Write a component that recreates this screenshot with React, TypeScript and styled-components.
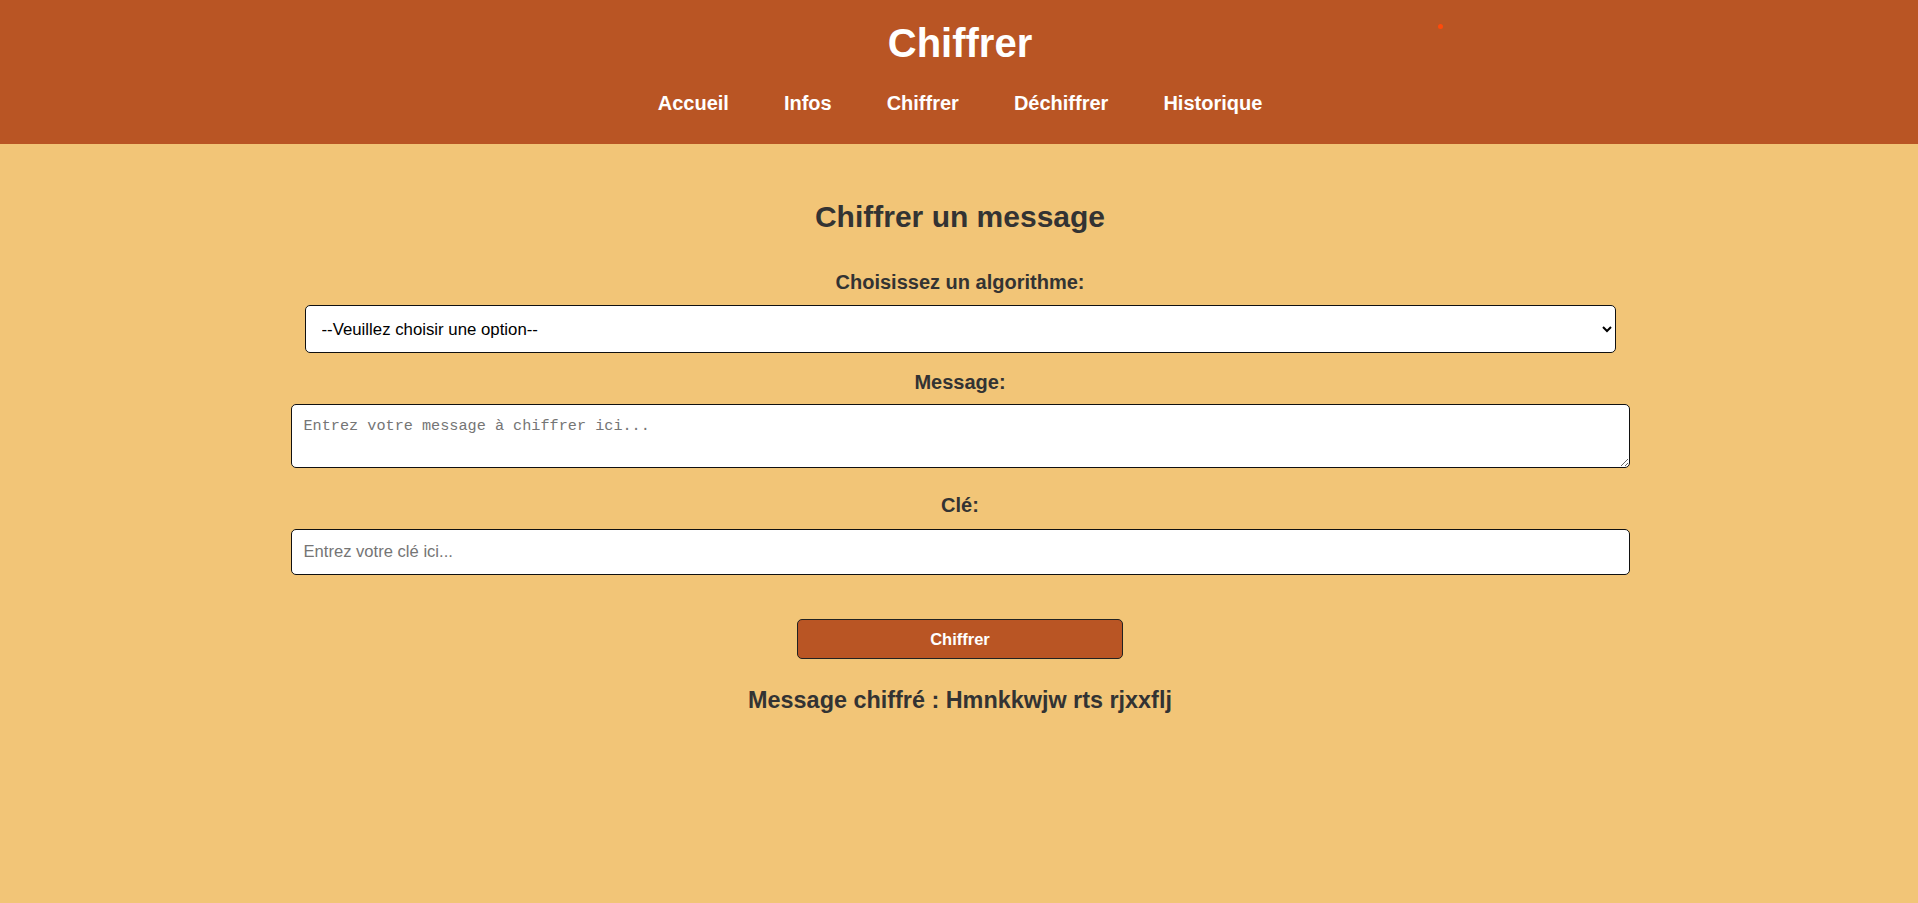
import styled, { createGlobalStyle } from 'styled-components'

const GlobalStyle = createGlobalStyle`
  body {
    margin: 0;
    background: #f2c577;
    font-family: "Liberation Sans", Arial, sans-serif;
    color: #333;
  }
`

const Header = styled.header`
  position: relative;
  background: #b95524;
  padding: 20px 0 29px 2px;
  text-align: center;
`

const SiteTitle = styled.h1`
  margin: 0;
  font-size: 40px;
  line-height: 46px;
  color: #fff;
`

const Nav = styled.nav`
  display: flex;
  justify-content: center;
  gap: 55px;
  margin-top: 26px;
`

const NavLink = styled.a`
  color: #fff;
  font-size: 20px;
  font-weight: bold;
  line-height: 23px;
  text-decoration: none;
`

const Dot = styled.span`
  position: absolute;
  top: 24px;
  left: calc(50% + 479px);
  width: 5px;
  height: 5px;
  border-radius: 50%;
  background: #ff4a0a;
`

const Main = styled.main`
  padding: 56px 0 0 2px;
  text-align: center;
`

const Form = styled.form`
  width: 1339px;
  margin: 0 auto;
`

const PageTitle = styled.h2`
  margin: 0;
  font-size: 30px;
  line-height: 34px;
`

const Label = styled.label<{ $top: number }>`
  display: block;
  margin-top: ${p => p.$top}px;
  font-size: 20px;
  font-weight: bold;
  line-height: 23px;
`

const Select = styled.select`
  display: block;
  box-sizing: border-box;
  width: 1311px;
  height: 48px;
  margin: 11px auto 0;
  padding: 0 13px 0 12px;
  border: 1px solid #111;
  border-radius: 5px;
  background: #fff;
  color: #000;
  font-family: "Liberation Sans", Arial, sans-serif;
  font-size: 16.8px;
`

const TextArea = styled.textarea`
  display: block;
  box-sizing: border-box;
  width: 100%;
  height: 64px;
  margin-top: 10px;
  padding: 12px 12px 0;
  border: 1px solid #111;
  border-radius: 5px;
  background: #fff;
  font-family: "Liberation Mono", monospace;
  font-size: 15.2px;
  resize: vertical;

  &::placeholder {
    color: #757575;
  }
`

const Input = styled.input`
  display: block;
  box-sizing: border-box;
  width: 100%;
  height: 46px;
  margin-top: 12px;
  padding: 0 12px;
  border: 1px solid #111;
  border-radius: 5px;
  background: #fff;
  font-family: "Liberation Sans", Arial, sans-serif;
  font-size: 16.6px;

  &::placeholder {
    color: #757575;
  }
`

const SubmitButton = styled.button`
  display: block;
  width: 326px;
  height: 40px;
  margin: 44px auto 0;
  border: 1px solid #222;
  border-radius: 5px;
  background: #b95524;
  color: #fff;
  font-family: "Liberation Sans", Arial, sans-serif;
  font-size: 16.5px;
  font-weight: bold;
  cursor: pointer;
`

const Result = styled.p`
  margin: 28px 0 0;
  font-size: 23.4px;
  font-weight: bold;
  line-height: 27px;
`

const links = ['Accueil', 'Infos', 'Chiffrer', 'Déchiffrer', 'Historique']

export default function App() {
  return (
    <>
      <GlobalStyle />
      <Header>
        <SiteTitle>Chiffrer</SiteTitle>
        <Nav>
          {links.map(l => (
            <NavLink key={l} href="#">{l}</NavLink>
          ))}
        </Nav>
        <Dot />
      </Header>
      <Main>
        <Form onSubmit={e => e.preventDefault()}>
          <PageTitle>Chiffrer un message</PageTitle>
          <Label $top={37} htmlFor="algo">Choisissez un algorithme:</Label>
          <Select id="algo" defaultValue="">
            <option value="">--Veuillez choisir une option--</option>
            <option value="cesar">César</option>
            <option value="vigenere">Vigenère</option>
          </Select>
          <Label $top={18} htmlFor="msg">Message:</Label>
          <TextArea id="msg" placeholder="Entrez votre message à chiffrer ici..." />
          <Label $top={26} htmlFor="key">Clé:</Label>
          <Input id="key" placeholder="Entrez votre clé ici..." />
          <SubmitButton type="submit">Chiffrer</SubmitButton>
          <Result>Message chiffré : Hmnkkwjw rts rjxxflj</Result>
        </Form>
      </Main>
    </>
  )
}
